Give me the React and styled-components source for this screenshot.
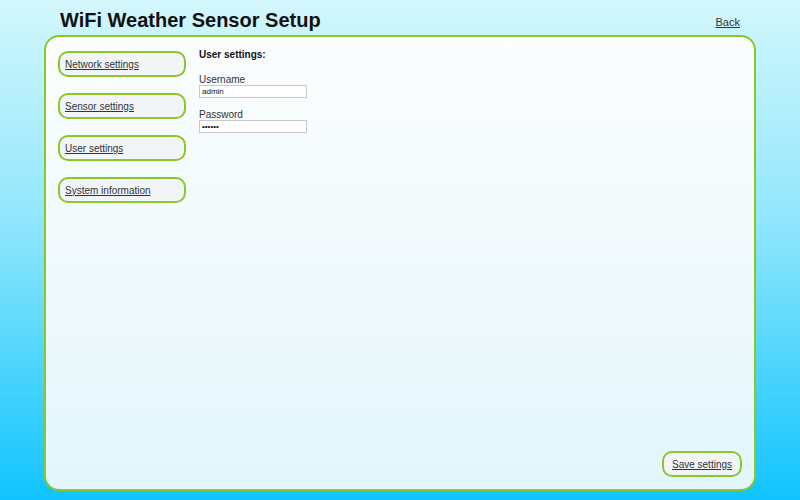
import React from 'react'
import styled, { createGlobalStyle } from 'styled-components'

const Global = createGlobalStyle`
  html, body {
    margin: 0;
    padding: 0;
    height: 500px;
    overflow: hidden;
  }
  body {
    background: linear-gradient(to bottom, #d3f7fc 0%, #8ee6fc 45%, #10c4fe 100%);
    font-family: "Liberation Sans", Arial, sans-serif;
    color: #222;
  }
`

const Page = styled.div`
  height: 500px;
  display: flex;
  flex-direction: column;
  box-sizing: border-box;
  padding: 0 44px 9px 44px;
`

const Header = styled.div`
  display: flex;
  justify-content: space-between;
  align-items: flex-end;
  height: 35px;
  padding: 0 16px 0 16px;
  box-sizing: border-box;
`

const Title = styled.h1`
  margin: 0 0 3px 0;
  font-size: 20px;
  font-weight: bold;
  color: #111;
  line-height: 24px;
`

const BackLink = styled.a`
  font-size: 11px;
  color: #333;
  text-decoration: underline;
  margin-bottom: 7px;
  cursor: pointer;
`

const Panel = styled.div`
  flex: 1;
  display: flex;
  flex-direction: column;
  border: 2px solid #8cc728;
  border-radius: 15px;
  background: linear-gradient(to bottom, #fbfdfe 0%, #eef9fc 60%, #e2f6fc 100%);
  padding: 14px 12px 12px 12px;
`

const Body = styled.div`
  flex: 1;
  display: flex;
  gap: 13px;
`

const Nav = styled.div`
  display: flex;
  flex-direction: column;
  gap: 16px;
  width: 128px;
`

const NavButton = styled.a`
  display: flex;
  align-items: center;
  box-sizing: border-box;
  width: ${p => p.width || '128px'};
  height: 26px;
  padding: 0 5px;
  border: 2px solid #8cc728;
  border-radius: 10px;
  background: #f1f5f8;
  font-size: 10px;
  white-space: nowrap;
  color: #333;
  text-decoration: underline;
  cursor: pointer;
  justify-content: ${p => (p.center ? 'center' : 'flex-start')};
`

const Content = styled.div`
  display: flex;
  flex-direction: column;
  margin-top: -2px;
`

const Heading = styled.div`
  font-size: 10px;
  font-weight: bold;
  color: #111;
  line-height: 12px;
  margin-bottom: 13px;
`

const Field = styled.div`
  display: flex;
  flex-direction: column;
  margin-bottom: 11px;
`

const Label = styled.label`
  font-size: 10px;
  color: #333;
  line-height: 11px;
`

const Input = styled.input`
  box-sizing: border-box;
  width: 108px;
  height: 13px;
  border: 1px solid #c8c8c8;
  background: #fff;
  padding: 0 2px;
  font-size: 8px;
  font-family: "Liberation Sans", Arial, sans-serif;
  color: #111;
  outline: none;
`

const Footer = styled.div`
  display: flex;
  justify-content: flex-end;
`

const items = ['Network settings', 'Sensor settings', 'User settings', 'System information']

export default function App() {
  return (
    <Page>
      <Global />
      <Header>
        <Title>WiFi Weather Sensor Setup</Title>
        <BackLink>Back</BackLink>
      </Header>
      <Panel>
        <Body>
          <Nav>
            {items.map(item => (
              <NavButton key={item}>{item}</NavButton>
            ))}
          </Nav>
          <Content>
            <Heading>User settings:</Heading>
            <Field>
              <Label>Username</Label>
              <Input type="text" defaultValue="admin" />
            </Field>
            <Field>
              <Label>Password</Label>
              <Input type="password" defaultValue="123456" />
            </Field>
          </Content>
        </Body>
        <Footer>
          <NavButton width="80px" center>Save settings</NavButton>
        </Footer>
      </Panel>
    </Page>
  )
}
